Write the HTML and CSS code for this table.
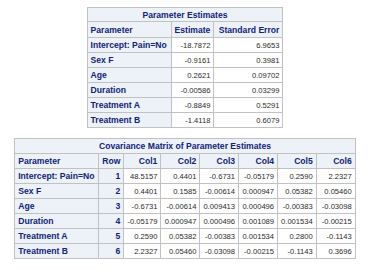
FILE: index.html
```html
<!DOCTYPE html>
<html>
<head>
<meta charset="utf-8">
<link rel="stylesheet" href="styles.css">
</head>
<body>
<div class="page">
  <table class="tbl t1">
    <colgroup><col class="w84"><col class="w41"><col class="w69"></colgroup>
    <tr><th class="title" colspan="3">Parameter Estimates</th></tr>
    <tr class="hdr"><th class="l">Parameter</th><th class="r">Estimate</th><th class="r">Standard Error</th></tr>
    <tr><th class="l">Intercept: Pain=No</th><td>-18.7872</td><td>6.9653</td></tr>
    <tr><th class="l">Sex F</th><td>-0.9161</td><td>0.3981</td></tr>
    <tr><th class="l">Age</th><td>0.2621</td><td>0.09702</td></tr>
    <tr><th class="l">Duration</th><td>-0.00586</td><td>0.03299</td></tr>
    <tr><th class="l">Treatment A</th><td>-0.8849</td><td>0.5291</td></tr>
    <tr><th class="l">Treatment B</th><td>-1.4118</td><td>0.6079</td></tr>
  </table>

  <table class="tbl t2">
    <colgroup><col class="w84"><col class="w24"><col class="w37"><col class="w39"><col class="w36"><col class="w39"><col class="w36"><col class="w39"></colgroup>
    <tr><th class="title" colspan="8">Covariance Matrix of Parameter Estimates</th></tr>
    <tr class="hdr"><th class="l">Parameter</th><th class="r">Row</th><th class="r">Col1</th><th class="r">Col2</th><th class="r">Col3</th><th class="r">Col4</th><th class="r">Col5</th><th class="r">Col6</th></tr>
    <tr><th class="l">Intercept: Pain=No</th><th class="r">1</th><td>48.5157</td><td>0.4401</td><td>-0.6731</td><td>-0.05179</td><td>0.2590</td><td>2.2327</td></tr>
    <tr><th class="l">Sex F</th><th class="r">2</th><td>0.4401</td><td>0.1585</td><td>-0.00614</td><td>0.000947</td><td>0.05382</td><td>0.05460</td></tr>
    <tr><th class="l">Age</th><th class="r">3</th><td>-0.6731</td><td>-0.00614</td><td>0.009413</td><td>0.000496</td><td>-0.00383</td><td>-0.03098</td></tr>
    <tr><th class="l">Duration</th><th class="r">4</th><td>-0.05179</td><td>0.000947</td><td>0.000496</td><td>0.001089</td><td>0.001534</td><td>-0.00215</td></tr>
    <tr><th class="l">Treatment A</th><th class="r">5</th><td>0.2590</td><td>0.05382</td><td>-0.00383</td><td>0.001534</td><td>0.2800</td><td>-0.1143</td></tr>
    <tr><th class="l">Treatment B</th><th class="r">6</th><td>2.2327</td><td>0.05460</td><td>-0.03098</td><td>-0.00215</td><td>-0.1143</td><td>0.3696</td></tr>
  </table>
</div>
</body>
</html>
```
FILE: styles.css
```css
html, body {
  margin: 0;
  padding: 0;
  background: #ffffff;
}
.page {
  width: 370px;
  padding-top: 7px;
  display: flex;
  flex-direction: column;
  align-items: center;
  gap: 10px;
  font-family: "Liberation Sans", Arial, sans-serif;
}
.tbl {
  border-collapse: collapse;
  table-layout: fixed;
  border: 1px solid #c1c1c1;
}
.tbl th, .tbl td {
  border: 1px solid #c1c1c1;
  height: 15px;
  padding: 0 3px;
  white-space: nowrap;
  overflow: hidden;
  box-sizing: border-box;
}
.tbl th {
  background: #edf2f9;
  color: #112277;
  font-weight: bold;
  font-size: 8.6px;
}
.tbl td {
  background: #ffffff;
  color: #2a2a2a;
  font-size: 7.6px;
  text-align: right;
}
.tbl th.title {
  text-align: center;
}
.t1 th.title {
  height: 14px;
}
.t1 .hdr th {
  height: 16px;
}
.tbl th.l { text-align: left; }
.tbl th.r { text-align: right; }
.w84 { width: 84px; }
.w41 { width: 41px; }
.w69 { width: 69px; }
.w24 { width: 24px; }
.w37 { width: 37px; }
.w39 { width: 39px; }
.w36 { width: 36px; }
```
